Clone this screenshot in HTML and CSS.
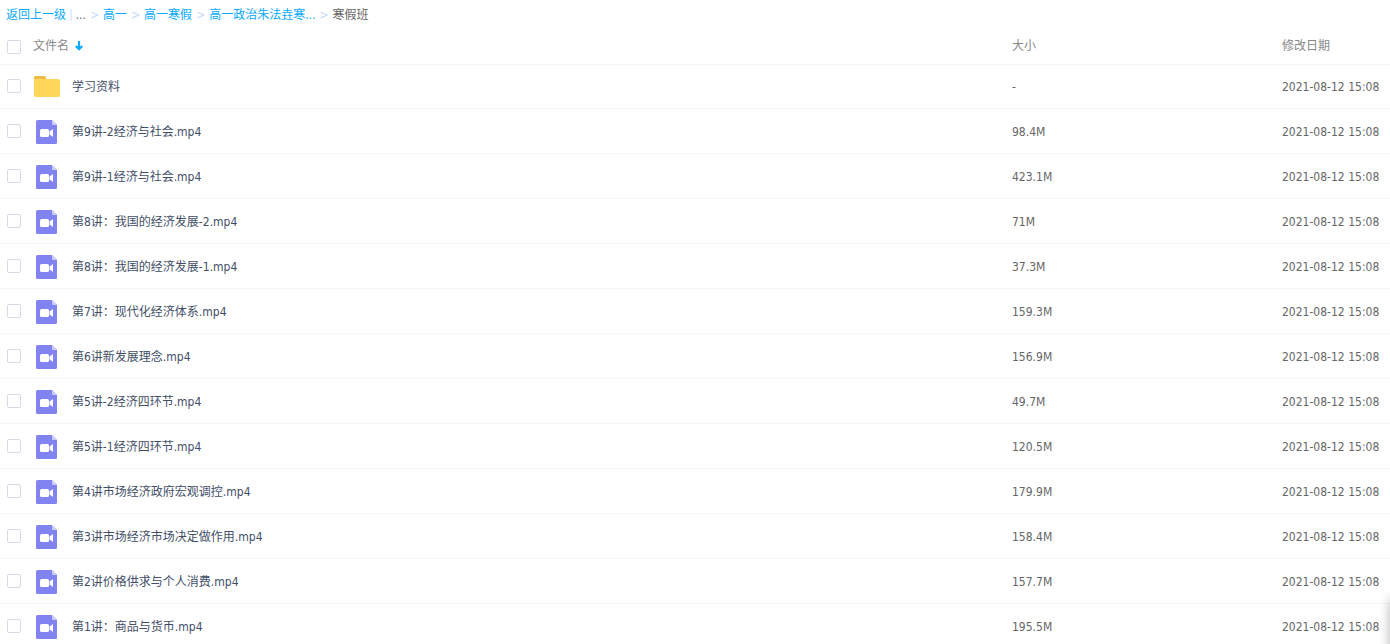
FILE: index.html
```
<!DOCTYPE html>
<html lang="zh-CN">
<head>
<meta charset="utf-8">
<title>寒假班</title>
<link rel="stylesheet" href="styles.css">
</head>
<body>
<svg class="sprite" aria-hidden="true">
  <symbol id="folder" viewBox="0 0 26 21">
    <path d="M0 5V1.500Q0 0 1.500 0H10.500Q12 0 12 1.500V5Z" fill="#ecbc45"/>
    <path d="M0 3H24.500Q26 3 26 4.500V19.500Q26 21 24.500 21H1.500Q0 21 0 19.500Z" fill="#ffd659"/>
  </symbol>
  <symbol id="video" viewBox="0 0 21 24">
    <path d="M1.500 0H16L21 5V22.500Q21 24 19.500 24H1.500Q0 24 0 22.500V1.500Q0 0 1.500 0Z" fill="#8183f1"/>
    <path d="M16 0L21 5H17Q16 5 16 4Z" fill="#cdcdfa"/>
    <rect x="4" y="9" width="9" height="8" rx="1.500" fill="#fff"/>
    <path d="M17 9V17L13.500 14.500V11.500Z" fill="#fff"/>
  </symbol>
</svg>
<nav class="crumbs" aria-label="路径">
  <a href="#">返回上一级</a><span class="bar">|</span><span>...</span><span class="sep">&gt;</span>
  <a href="#">高一</a><span class="sep">&gt;</span>
  <a href="#">高一寒假</a><span class="sep">&gt;</span>
  <a href="#">高一政治朱法垚寒...</a><span class="sep">&gt;</span>
  <span>寒假班</span>
</nav>
<table class="files">
  <colgroup><col class="col-check"><col class="col-name"><col class="col-size"><col class="col-date"></colgroup>
  <thead>
    <tr>
      <th><input class="check" type="checkbox" aria-label="全选"></th>
      <th class="label"><button class="sort" type="button">文件名<svg class="arrow" viewBox="0 0 8 10" aria-hidden="true"><path d="M4 0V8M0.700 5L4 8.300L7.300 5" fill="none" stroke="#09aaff" stroke-width="2.200"/></svg></button></th>
      <th class="label">大小</th>
      <th class="label">修改日期</th>
    </tr>
  </thead>
  <tbody id="rows"></tbody>
</table>
<div class="corner-shadow"></div>
<script src="files.js"></script>
</body>
</html>
```
FILE: styles.css
```
body {
  margin: 0;
  background: #fff;
  color: #666;
  font: 12px/18px "DejaVu Sans Condensed", "Noto Sans", "Noto Sans CJK SC", sans-serif;
  overflow: hidden;
}
.sprite {
  position: absolute;
  width: 0;
  height: 0;
}
.crumbs {
  display: flex;
  align-items: center;
  gap: 4px;
  height: 29px;
  padding: 0 6px;
  white-space: nowrap;
}
.crumbs a {
  color: #09aaff;
  text-decoration: none;
}
.crumbs .bar,
.crumbs .sep {
  color: #c4dbfe;
}
.crumbs .bar {
  margin: 0 -1px;
}
.files {
  width: 100%;
  table-layout: fixed;
  border-collapse: separate;
  border-spacing: 0;
}
.col-check { width: 33px; }
.col-size { width: 270px; }
.col-date { width: 108px; }
.files th,
.files td {
  box-sizing: border-box;
  height: 45px;
  padding: 0;
  border-bottom: 1px solid #f2f6fd;
  text-align: left;
  vertical-align: middle;
  white-space: nowrap;
}
.files th {
  height: 36px;
  color: #888;
  font-weight: normal;
}
.files th.label {
  padding-bottom: 2px;
}
.files td + td {
  padding-top: 2px;
}
.files tbody tr:first-child td {
  height: 44px;
  padding-top: 0;
}
.files tbody tr:first-child td:first-child {
  padding-bottom: 1px;
}
.check {
  display: block;
  appearance: none;
  box-sizing: border-box;
  width: 14px;
  height: 14px;
  margin: 0 0 0 7px;
  border: 1px solid #d4dbe5;
  border-radius: 2px;
  background: #fff;
}
.check:checked {
  background: #09aaff;
}
.sort {
  display: flex;
  align-items: center;
  gap: 6px;
  padding: 0;
  border: 0;
  background: none;
  color: inherit;
  font: inherit;
}
.arrow {
  width: 8px;
  height: 10px;
}
.name {
  display: flex;
  align-items: center;
}
.name a {
  color: #424e67;
  text-decoration: none;
}
.icon {
  display: flex;
  width: 39px;
}
.icon-folder {
  width: 26px;
  height: 21px;
  margin-left: 1px;
}
.icon-video {
  width: 21px;
  height: 24px;
  margin-left: 3px;
}
.corner-shadow {
  position: fixed;
  right: -12px;
  bottom: -12px;
  width: 12px;
  height: 56px;
  box-shadow: 0 0 12px rgba(0, 0, 0, 0.3);
}
```
FILE: files.js
```
const date = "2021-08-12 15:08";
const files = [
  ["学习资料", "-"],
  ["第9讲-2经济与社会.mp4", "98.4M"],
  ["第9讲-1经济与社会.mp4", "423.1M"],
  ["第8讲：我国的经济发展-2.mp4", "71M"],
  ["第8讲：我国的经济发展-1.mp4", "37.3M"],
  ["第7讲：现代化经济体系.mp4", "159.3M"],
  ["第6讲新发展理念.mp4", "156.9M"],
  ["第5讲-2经济四环节.mp4", "49.7M"],
  ["第5讲-1经济四环节.mp4", "120.5M"],
  ["第4讲市场经济政府宏观调控.mp4", "179.9M"],
  ["第3讲市场经济市场决定做作用.mp4", "158.4M"],
  ["第2讲价格供求与个人消费.mp4", "157.7M"],
  ["第1讲：商品与货币.mp4", "195.5M"]
];
document.getElementById("rows").innerHTML = files.map(([name, size]) => {
  const kind = size === "-" ? "folder" : "video";
  return `<tr>
    <td><input class="check" type="checkbox" aria-label="${name}"></td>
    <td><div class="name"><span class="icon"><svg class="icon-${kind}" aria-hidden="true"><use href="#${kind}"/></svg></span><a href="#">${name}</a></div></td>
    <td>${size}</td>
    <td>${date}</td>
  </tr>`;
}).join("");
```
